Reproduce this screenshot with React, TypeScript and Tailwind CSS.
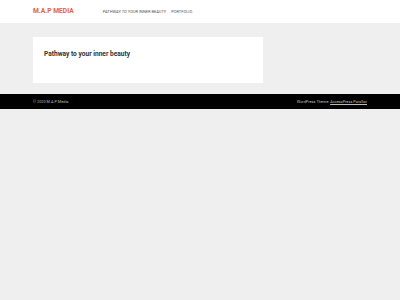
export default function App() {
  return (
    <div className="min-h-[300px] w-[400px] bg-[#efefef]" style={{ fontFamily: "Roboto, 'Liberation Sans', sans-serif" }}>
      <header className="h-[23px] bg-white">
        <div className="mx-[33px] flex h-full items-center">
          <div className="text-[6.7px] font-bold leading-none text-[#e8622c]">M.A.P MEDIA</div>
          <nav className="ml-[29px] flex items-center gap-[5px] text-[4px] uppercase leading-none text-[#555]">
            <span>Pathway to your inner beauty</span>
            <span>Portfolio</span>
          </nav>
        </div>
      </header>
      <main className="mx-[33px] pt-[14px] pb-[11px]">
        <div className="h-[46px] w-[230px] bg-white pl-[11px] pt-[12px]">
          <h1 className="text-[6.6px] font-bold leading-[10px] text-[#333]">Pathway to your inner beauty</h1>
        </div>
      </main>
      <footer className="h-[15px] bg-black">
        <div className="mx-[33px] flex h-full items-center justify-between text-[3.85px] leading-none text-[#bbb]">
          <span>© 2020 M.A.P Media</span>
          <span>
            WordPress Theme: <span className="underline">AccessPress Parallax</span>
          </span>
        </div>
      </footer>
    </div>
  );
}
